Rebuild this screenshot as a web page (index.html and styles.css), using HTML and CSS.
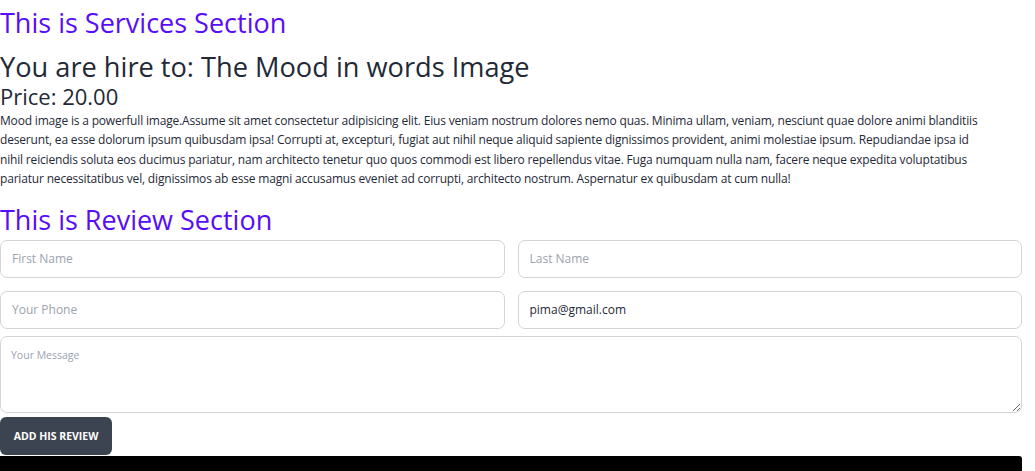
FILE: index.html
```html
<!DOCTYPE html>
<html>
<head>
<meta charset="utf-8">
<link rel="stylesheet" href="styles.css">
</head>
<body>
<div class="page">
  <h2 class="section-title">This is Services Section</h2>
  <h2 class="service-name">You are hire to: The Mood in words Image</h2>
  <h3 class="price">Price: 20.00</h3>
  <p class="desc">Mood image is a powerfull image.Assume sit amet consectetur adipisicing elit. Eius veniam nostrum dolores nemo quas. Minima ullam, veniam, nesciunt quae dolore animi blanditiis<br>deserunt, ea esse dolorum ipsum quibusdam ipsa! Corrupti at, excepturi, fugiat aut nihil neque aliquid sapiente dignissimos provident, animi molestiae ipsum. Repudiandae ipsa id<br>nihil reiciendis soluta eos ducimus pariatur, nam architecto tenetur quo quos commodi est libero repellendus vitae. Fuga numquam nulla nam, facere neque expedita voluptatibus<br>pariatur necessitatibus vel, dignissimos ab esse magni accusamus eveniet ad corrupti, architecto nostrum. Aspernatur ex quibusdam at cum nulla!</p>
  <h2 class="section-title review-title">This is Review Section</h2>
  <form class="review-form">
    <div class="grid-row">
      <input class="field" type="text" placeholder="First Name">
      <input class="field" type="text" placeholder="Last Name">
    </div>
    <div class="grid-row">
      <input class="field" type="text" placeholder="Your Phone">
      <input class="field" type="email" value="pima@gmail.com">
    </div>
    <textarea class="message" placeholder="Your Message"></textarea>
    <button class="btn" type="button">Add his review</button>
  </form>
  <footer class="footer"></footer>
</div>
</body>
</html>
```
FILE: styles.css
```css
* { box-sizing: border-box; }
html, body { margin: 0; padding: 0; background: #fff; }
body {
  font-family: "Open Sans", "Noto Sans", sans-serif;
  color: #1f2937;
}
.page {
  width: 1022px;
}
.section-title {
  margin: 0;
  padding-top: 5px;
  font-size: 27px;
  line-height: 36px;
  font-weight: 400;
  color: #570df8;
}
.service-name {
  margin: 10px 0 0;
  font-size: 27.2px;
  line-height: 32px;
  font-weight: 400;
  color: #1f2937;
}
.price {
  margin: 0;
  font-size: 22px;
  line-height: 26px;
  font-weight: 400;
}
.desc {
  margin: 2px 0 0;
  font-size: 12px;
  letter-spacing: -0.18px;
  line-height: 19.4px;
}
.review-title {
  margin-top: 8px;
}
.review-form {
  margin-top: 2px;
  display: flex;
  flex-direction: column;
}
.grid-row {
  display: grid;
  grid-template-columns: 1fr 1fr;
  column-gap: 13px;
  margin-bottom: 13px;
}
.field {
  height: 38px;
  border: 1px solid #d4d4d8;
  border-radius: 7px;
  padding: 0 11px;
  font-family: inherit;
  font-size: 12px;
  color: #1f2937;
  background: #fff;
  outline: none;
}
.field::placeholder, .message::placeholder {
  color: #9ca3af;
}
.message {
  margin-top: -6px;
  height: 77px;
  border: 1px solid #d4d4d8;
  border-radius: 7px;
  padding: 11px 10px;
  font-family: inherit;
  font-size: 10.5px;
  resize: vertical;
  outline: none;
}
.btn {
  margin-top: 4px;
  align-self: flex-start;
  height: 38px;
  width: 112px;
  background: #3d4451;
  color: #fff;
  border: none;
  border-radius: 6px;
  font-family: inherit;
  font-weight: 700;
  font-size: 10.5px;
  text-transform: uppercase;
  padding: 0;
}
.footer {
  margin-top: 1px;
  height: 40px;
  background: #000;
  border-top-right-radius: 3px;
}
```
